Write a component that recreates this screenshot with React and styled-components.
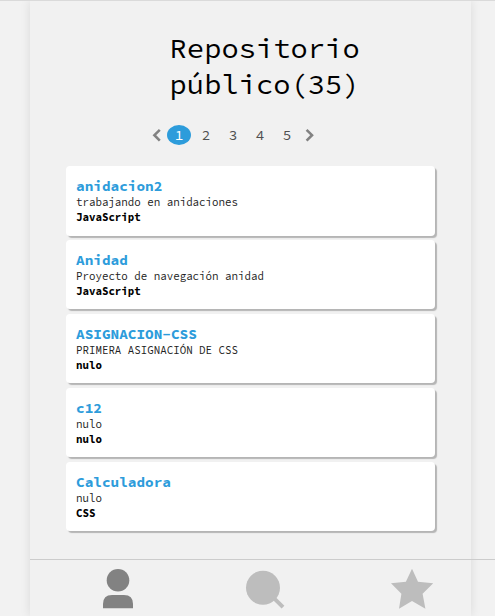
import React from "react";
import styled, { createGlobalStyle } from "styled-components";

const Global = createGlobalStyle`
  * { box-sizing: border-box; }
  body {
    margin: 0;
    background: #f2f2f2;
    font-family: "Source Code Pro", "Noto Sans Mono CJK SC", "Liberation Mono", monospace;
    overflow: hidden;
  }
`;

const Page = styled.div`
  width: 495px;
  height: 616px;
  border-top: 1px solid #dadada;
  padding-left: 30px;
  overflow: hidden;
`;

const Panel = styled.main`
  width: 441px;
  height: 615px;
  display: flex;
  flex-direction: column;
  background: #f1f1f1;
  box-shadow: 0 0 10px rgba(0, 0, 0, 0.1);
`;

const Title = styled.h1`
  margin: 29px 0 0 139.6px;
  width: 220px;
  height: 72px;
  font-size: 28.8px;
  line-height: 36px;
  font-weight: 400;
  color: #000;
`;

const Pager = styled.nav`
  display: flex;
  align-items: center;
  height: 20px;
  margin: 23px 0 0 122px;
`;

const PageNumber = styled.a`
  width: 24px;
  height: 20px;
  margin-right: 3px;
  border-radius: 50%;
  text-align: center;
  font-size: 14.4px;
  line-height: 20px;
  color: ${(p) => (p.$active ? "#fff" : "#4f4f4f")};
  background: ${(p) => (p.$active ? "#2d9cdb" : "transparent")};
`;

const Arrow = styled.svg`
  width: 9px;
  height: 14px;
  margin-left: ${(p) => p.$before || 0}px;
  margin-right: ${(p) => p.$after || 0}px;
  fill: none;
  stroke: #828282;
  stroke-width: 2.6;
`;

const List = styled.ul`
  list-style: none;
  display: flex;
  flex-direction: column;
  gap: 4.3px;
  margin: 21px 0 0 36px;
  padding: 0;
  width: 369px;
`;

const Card = styled.li`
  height: 69.6px;
  padding: 12px 10px 0;
  border-radius: 4px;
  background: #fff;
  box-shadow: 2px 2px 1px #b5b5b5;
`;

const Name = styled.h2`
  margin: 0;
  font-size: 14.4px;
  line-height: 17.4px;
  font-weight: 700;
  color: #2d9cdb;
`;

const Detail = styled.p`
  margin: 0;
  font-size: 10.8px;
  line-height: 14.6px;
  white-space: pre;
  font-weight: ${(p) => (p.$strong ? 700 : 400)};
  color: ${(p) => (p.$strong ? "#000" : "#222")};
`;

const TabBar = styled.footer`
  width: 465px;
  height: 57px;
  margin-top: auto;
  padding-left: 14.5px;
  display: flex;
  border-top: 1px solid #ccc;
`;

const Tab = styled.a`
  width: 147px;
  display: flex;
  justify-content: center;
  padding-top: 5px;
  color: ${(p) => (p.$active ? "#828282" : "#bdbdbd")};
  svg { width: 48px; height: 48px; fill: currentColor; flex: none; }
`;

const repos = [
  ["anidacion2", "trabajando en anidaciones", "JavaScript"],
  ["Anidad", "Proyecto de navegación anidad", "JavaScript"],
  ["ASIGNACION-CSS", "PRIMERA ASIGNACIÓN DE CSS", "nulo"],
  ["c12", "nulo", "nulo"],
  ["Calculadora", "nulo", "CSS"],
];

export default function App() {
  return (
    <>
      <Global />
      <Page>
        <Panel>
          <Title>Repositorio público(35)</Title>
          <Pager>
            <Arrow $after={6} viewBox="0 0 9 14"><path d="M7.8 1.8 2.4 7.2l5.4 5.4" /></Arrow>
            {[1, 2, 3, 4, 5].map((n) => (
              <PageNumber key={n} $active={n === 1}>{n}</PageNumber>
            ))}
            <Arrow $before={3} viewBox="0 0 9 14"><path d="M1.6 1.8 7 7.2l-5.4 5.4" /></Arrow>
          </Pager>
          <List>
            {repos.map(([name, text, language]) => (
              <Card key={name}>
                <Name>{name}</Name>
                <Detail>{text}</Detail>
                <Detail $strong>{language}</Detail>
              </Card>
            ))}
          </List>
          <TabBar>
            <Tab $active>
              <svg viewBox="94 565 48 48">
                <circle cx="118" cy="580.2" r="11.3" />
                <path d="M103 608.3v-4.3q0-9 9-9h12q9 0 9 9v4.3z" />
              </svg>
            </Tab>
            <Tab>
              <svg viewBox="241 565 48 48">
                <circle cx="263" cy="587.7" r="17" />
                <path d="m273 600 2.8-2.8 8.6 8.6-2.8 2.8z" />
              </svg>
            </Tab>
            <Tab>
              <svg viewBox="388 565 48 48">
                <path d="m412 568.7 6 13 15.2 1.6-10.6 10.4 2.8 15-13.4-7.6-13 7.6 2.4-15-10.4-10.4 14.9-1.6z" />
              </svg>
            </Tab>
          </TabBar>
        </Panel>
      </Page>
    </>
  );
}
